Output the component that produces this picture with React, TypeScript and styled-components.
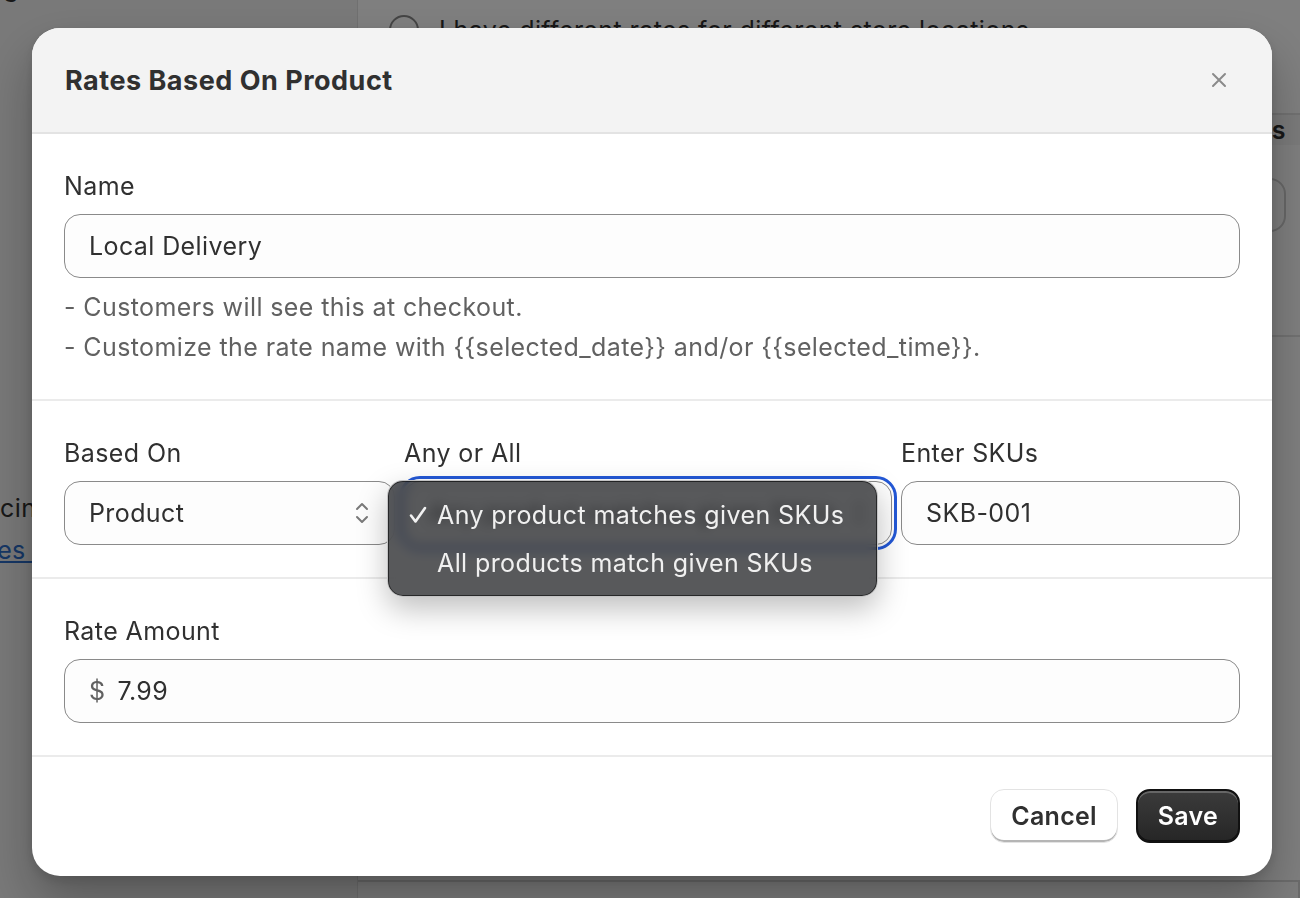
import styled, { createGlobalStyle } from 'styled-components';

const GlobalStyle = createGlobalStyle`
    html, body {
        margin: 0;
        padding: 0;
    }
    body {
        font-family: Inter, "Noto Sans", sans-serif;
        color: #303030;
        overflow: hidden;
    }
    * {
        box-sizing: border-box;
    }
`;

/* ---------- page behind the modal ---------- */

const Page = styled.div`
    width: 1300px;
    height: 898px;
    overflow: hidden;
    display: grid;
    grid-template-columns: 358px 1fr;
    background: #f3f3f3;
    font-size: 25px;
    letter-spacing: 0.4px;
`;

const Sidebar = styled.aside`
    border-right: 1px solid #e0e0e0;
    display: flex;
    flex-direction: column;
    overflow: hidden;
`;

const SidebarNote = styled.div<{ $shift: number; $top?: number; $link?: boolean }>`
    flex-shrink: 0;
    margin-left: ${(p) => p.$shift}px;
    margin-top: ${(p) => p.$top ?? 0}px;
    line-height: 42px;
    white-space: nowrap;
    color: ${(p) => (p.$link ? '#2c6ecb' : '#303030')};
    text-decoration: ${(p) => (p.$link ? 'underline' : 'none')};
`;

const Main = styled.main`
    background: #fff;
    display: flex;
    flex-direction: column;
    overflow: hidden;
`;

const RadioRow = styled.div`
    flex-shrink: 0;
    display: flex;
    align-items: center;
    gap: 20px;
    height: 60px;
    padding-left: 31px;
    white-space: nowrap;
`;

const Radio = styled.span`
    width: 30px;
    height: 30px;
    border-radius: 50%;
    border: 2px solid #8a8a8a;
    background: #fff;
`;

const Table = styled.div`
    flex-shrink: 0;
    margin-top: 53px;
    border-top: 2px solid #e3e3e3;
    border-bottom: 2px solid #e3e3e3;
`;

const TableHead = styled.div`
    height: 30px;
    display: flex;
    justify-content: flex-end;
    align-items: center;
    padding-right: 14px;
    font-weight: 600;
    background: #f7f7f7;
`;

const TableRow = styled.div`
    height: 190px;
    display: flex;
    justify-content: flex-end;
    align-items: flex-start;
    padding: 33px 14px 0 0;
`;

const GhostButton = styled.div`
    width: 160px;
    height: 54px;
    border: 2px solid #d0d0d0;
    border-radius: 16px;
`;

const BottomCard = styled.div`
    flex-shrink: 0;
    margin: 543px 0 0 -26px;
    height: 60px;
    border: 2px solid #d8d8d8;
    border-radius: 22px 0 0 0;
    background: #fafafa;
`;

/* ---------- modal ---------- */

const Overlay = styled.div`
    position: fixed;
    inset: 0;
    background: rgba(0, 0, 0, 0.5);
    display: flex;
    align-items: flex-start;
    padding: 28px 0 0 32px;
    font-size: 25px;
    letter-spacing: 0.4px;
`;

const Modal = styled.div`
    width: 1240px;
    background: #fff;
    border-radius: 28px;
    overflow: hidden;
    box-shadow: 0 26px 50px rgba(0, 0, 0, 0.28), 0 4px 12px rgba(0, 0, 0, 0.12);
`;

const Header = styled.header`
    height: 106px;
    background: #f3f3f3;
    border-bottom: 2px solid #e3e3e3;
    display: flex;
    align-items: center;
    justify-content: space-between;
    padding: 0 44px 0 33px;
`;

const Title = styled.h2`
    margin: 0;
    font-size: 27px;
    font-weight: 650;
    letter-spacing: 0.5px;
    color: #303030;
`;

const CloseButton = styled.button`
    width: 18px;
    height: 18px;
    padding: 0;
    border: none;
    background: none;
    display: flex;
    align-items: center;
    justify-content: center;
    cursor: pointer;
`;

const Section = styled.section`
    padding: 32px;
    border-bottom: 2px solid #ebebeb;
`;

const Label = styled.label`
    display: block;
    line-height: 40px;
    margin-bottom: 8px;
    color: #303030;
`;

const InputBox = styled.div<{ $focused?: boolean }>`
    height: 64px;
    border: 1px solid #8a8a8a;
    border-radius: 16px;
    background: #fdfdfd;
    display: flex;
    align-items: center;
    gap: 12px;
    padding: 0 24px;
    color: #303030;
    outline: ${(p) => (p.$focused ? '3px solid #2358d6' : 'none')};
    outline-offset: 2px;
`;

const Prefix = styled.span`
    color: #616161;
`;

const InputText = styled.input`
    flex: 1;
    min-width: 0;
    border: none;
    background: transparent;
    font: inherit;
    letter-spacing: inherit;
    color: inherit;
    padding: 0;
    outline: none;
`;

const SelectText = styled.span`
    flex: 1;
    min-width: 0;
    white-space: nowrap;
    overflow: hidden;
`;

const HelpText = styled.div`
    margin-top: 9px;
    line-height: 40px;
    color: #616161;
`;

const FieldRow = styled.div`
    display: grid;
    grid-template-columns: 331px 488px minmax(0, 1fr);
    column-gap: 9px;
`;

const Field = styled.div`
    position: relative;
    min-width: 0;
`;

const Menu = styled.div`
    position: absolute;
    left: -17px;
    top: 47px;
    width: 491px;
    padding: 10px 0 9px;
    border-radius: 16px;
    background: rgba(46, 47, 50, 0.8);
    backdrop-filter: blur(6px);
    border: 1px solid rgba(215, 215, 215, 0.85);
    box-shadow: 0 0 0 1px rgba(0, 0, 0, 0.55) inset, 0 12px 30px rgba(0, 0, 0, 0.25);
    color: #f0f0f0;
    z-index: 2;
`;

const MenuItem = styled.div`
    display: flex;
    align-items: center;
    height: 48px;
    padding-left: 20px;
    white-space: nowrap;
`;

const CheckSlot = styled.span`
    width: 29px;
    display: flex;
    align-items: center;
`;

const Footer = styled.footer`
    display: flex;
    justify-content: flex-end;
    gap: 18px;
    padding: 32px 32px 33px;
`;

const Button = styled.button<{ $primary?: boolean }>`
    height: 54px;
    padding: 0 20px;
    border-radius: 14px;
    font-family: inherit;
    font-size: 25px;
    letter-spacing: 0.25px;
    font-weight: 600;
    cursor: pointer;
    color: ${(p) => (p.$primary ? '#fff' : '#303030')};
    background: ${(p) => (p.$primary ? 'linear-gradient(#3b3b3b, #262626)' : '#fff')};
    border: ${(p) => (p.$primary ? '2px solid #111' : '1px solid #e3e3e3')};
    box-shadow: ${(p) =>
        p.$primary
            ? 'inset 0 2px 0 rgba(255,255,255,0.22), inset 0 -1px 0 rgba(0,0,0,0.6)'
            : 'inset 0 -2px 0 #b5b5b5'};
`;

const CloseIcon = () => (
    <svg width="16" height="16" viewBox="0 0 16 16" fill="none">
        <path d="M2 2L14 14M14 2L2 14" stroke="#8a8a8a" strokeWidth="2" strokeLinecap="round" />
    </svg>
);

const ChevronsIcon = () => (
    <svg width="16" height="24" viewBox="0 0 16 24" fill="none">
        <path
            d="M3 8L8 3L13 8M3 16L8 21L13 16"
            stroke="#7a7a7a"
            strokeWidth="2"
            strokeLinecap="round"
            strokeLinejoin="round"
        />
    </svg>
);

const CheckIcon = () => (
    <svg width="20" height="20" viewBox="0 0 20 20" fill="none">
        <path
            d="M3 10.5L7.5 16.5L17 3"
            stroke="#f2f2f2"
            strokeWidth="2.6"
            strokeLinecap="round"
            strokeLinejoin="round"
        />
    </svg>
);

const App = () => {
    return (
        <>
            <GlobalStyle />
            <Page>
                <Sidebar>
                    <SidebarNote $shift={-66} $top={-33}>
                        Pricing
                    </SidebarNote>
                    <SidebarNote $shift={-33} $top={478}>
                        Pricing by product
                    </SidebarNote>
                    <SidebarNote $shift={-42} $link>
                        Rates Vary
                    </SidebarNote>
                </Sidebar>
                <Main>
                    <RadioRow>
                        <Radio />
                        I have different rates for different store locations
                    </RadioRow>
                    <Table>
                        <TableHead>Actions</TableHead>
                        <TableRow>
                            <GhostButton />
                        </TableRow>
                    </Table>
                    <BottomCard />
                </Main>
            </Page>

            <Overlay>
                <Modal>
                    <Header>
                        <Title>Rates Based On Product</Title>
                        <CloseButton aria-label="Close">
                            <CloseIcon />
                        </CloseButton>
                    </Header>

                    <Section>
                        <Label>Name</Label>
                        <InputBox>
                            <InputText defaultValue="Local Delivery" />
                        </InputBox>
                        <HelpText>
                            - Customers will see this at checkout.
                            <br />- Customize the rate name with {'{{selected_date}}'} and/or{' '}
                            {'{{selected_time}}'}.
                        </HelpText>
                    </Section>

                    <Section>
                        <FieldRow>
                            <Field>
                                <Label>Based On</Label>
                                <InputBox>
                                    <SelectText>Product</SelectText>
                                    <ChevronsIcon />
                                </InputBox>
                            </Field>
                            <Field>
                                <Label>Any or All</Label>
                                <InputBox $focused>
                                    <SelectText>Any product matches given SKUs</SelectText>
                                    <ChevronsIcon />
                                </InputBox>
                                <Menu>
                                    <MenuItem>
                                        <CheckSlot>
                                            <CheckIcon />
                                        </CheckSlot>
                                        Any product matches given SKUs
                                    </MenuItem>
                                    <MenuItem>
                                        <CheckSlot />
                                        All products match given SKUs
                                    </MenuItem>
                                </Menu>
                            </Field>
                            <Field>
                                <Label>Enter SKUs</Label>
                                <InputBox>
                                    <InputText defaultValue="SKB-001" />
                                </InputBox>
                            </Field>
                        </FieldRow>
                    </Section>

                    <Section>
                        <Label>Rate Amount</Label>
                        <InputBox>
                            <Prefix>$</Prefix>
                            <InputText defaultValue="7.99" />
                        </InputBox>
                    </Section>

                    <Footer>
                        <Button>Cancel</Button>
                        <Button $primary>Save</Button>
                    </Footer>
                </Modal>
            </Overlay>
        </>
    );
};

export default App;
